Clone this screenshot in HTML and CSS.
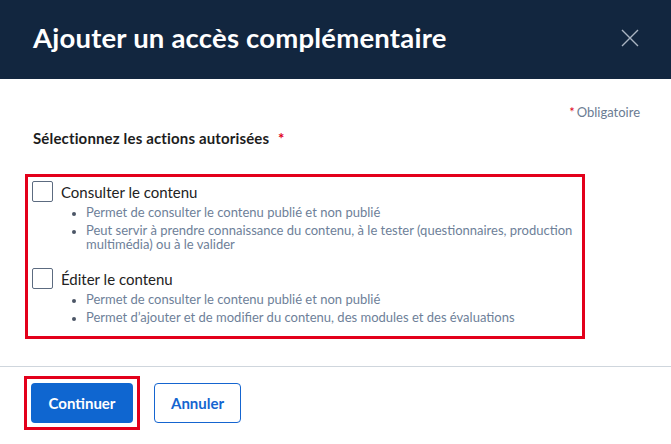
FILE: index.html
```html
<!DOCTYPE html>
<html lang="fr">
<head>
<meta charset="utf-8">
<title>Ajouter un accès complémentaire</title>
<link rel="stylesheet" href="styles.css">
</head>
<body>
<div class="dialog">
  <header class="dlg-header">
    <h1 class="dlg-title">Ajouter un accès complémentaire</h1>
    <button class="dlg-close" aria-label="Fermer">
      <svg width="18" height="18" viewBox="0 0 18 18"><path d="M1 1 L17 17 M17 1 L1 17" stroke="#aab4c2" stroke-width="1.4" fill="none"/></svg>
    </button>
  </header>
  <main class="dlg-body">
    <p class="required-note"><span class="star">*</span>Obligatoire</p>
    <p class="field-label">Sélectionnez les actions autorisées <span class="star star-lbl">*</span></p>
    <div class="options">
      <div class="option">
        <label class="opt-row"><span class="checkbox"></span><span class="opt-title">Consulter le contenu</span></label>
        <ul class="opt-desc">
          <li>Permet de consulter le contenu publié et non publié</li>
          <li>Peut servir à prendre connaissance du contenu, à le tester (questionnaires, production multimédia) ou à le valider</li>
        </ul>
      </div>
      <div class="option">
        <label class="opt-row"><span class="checkbox"></span><span class="opt-title">Éditer le contenu</span></label>
        <ul class="opt-desc">
          <li>Permet de consulter le contenu publié et non publié</li>
          <li>Permet d’ajouter et de modifier du contenu, des modules et des évaluations</li>
        </ul>
      </div>
    </div>
  </main>
  <footer class="dlg-footer">
    <div class="highlight"><button class="btn btn-primary">Continuer</button></div>
    <button class="btn btn-secondary">Annuler</button>
  </footer>
</div>
</body>
</html>
```
FILE: styles.css
```css
* { box-sizing: border-box; }
body {
  margin: 0;
  font-family: Lato, "Noto Sans", sans-serif;
  background: #fff;
  color: #1d1d1d;
}
.dialog { width: 671px; }
.dlg-header {
  height: 79px;
  background: #12263f;
  display: flex;
  align-items: center;
  justify-content: space-between;
  padding: 0 32px 4px 33px;
}
.dlg-title {
  margin: 0;
  color: #fff;
  font-size: 27.5px;
  font-weight: 700;
  letter-spacing: 0.2px;
}
.dlg-close {
  background: none;
  border: 0;
  padding: 0;
  width: 18px;
  height: 18px;
  display: flex;
}
.dlg-body {
  padding: 24px 31px 27px 25px;
}
.required-note {
  margin: 0;
  text-align: right;
  font-size: 13px;
  color: #6b7c93;
  line-height: 18px;
}
.star { color: #e0001a; margin-right: 2px; }
.star-lbl { margin-left: 5px; }
.field-label {
  margin: 8px 0 0 8px;
  font-size: 15px;
  font-weight: 700;
  letter-spacing: 0.15px;
  line-height: 18px;
  color: #1d1d1d;
}
.options {
  margin-top: 27px;
  width: 560px;
  border: 3px solid #e3001b;
  padding: 4px 4px 8px 4px;
}
.option + .option { margin-top: 17px; }
.opt-row {
  display: flex;
  align-items: center;
  gap: 8px;
}
.checkbox {
  width: 21px;
  height: 21px;
  border: 1px solid #5c6b80;
  border-radius: 2px;
  background: #fff;
}
.opt-title {
  font-size: 15px;
  color: #222;
}
.opt-desc {
  margin: 3px 0 0 0;
  padding-left: 54px;
  font-size: 13px;
  line-height: 14px;
  color: #6e7f99;
}
.opt-desc li { margin-bottom: 4px; }
.opt-desc li::marker { font-size: 11px; color: #4b5566; }
.dlg-footer {
  border-top: 1px solid #cfd6dd;
  padding: 9px 0 0 24px;
  display: flex;
  align-items: center;
  gap: 14px;
}
.highlight {
  border: 3px solid #e3001b;
  padding: 4px 4px;
}
.btn {
  height: 40px;
  border-radius: 4px;
  font-family: Lato, "Noto Sans", sans-serif;
  font-size: 15px;
  font-weight: 700;
  padding: 0 16px;
}
.btn-primary {
  width: 102px;
  background: #0f66d0;
  color: #fff;
  border: 0;
}
.btn-secondary {
  width: 87px;
  background: #fff;
  color: #1565d0;
  border: 1px solid #1565d0;
}
```
